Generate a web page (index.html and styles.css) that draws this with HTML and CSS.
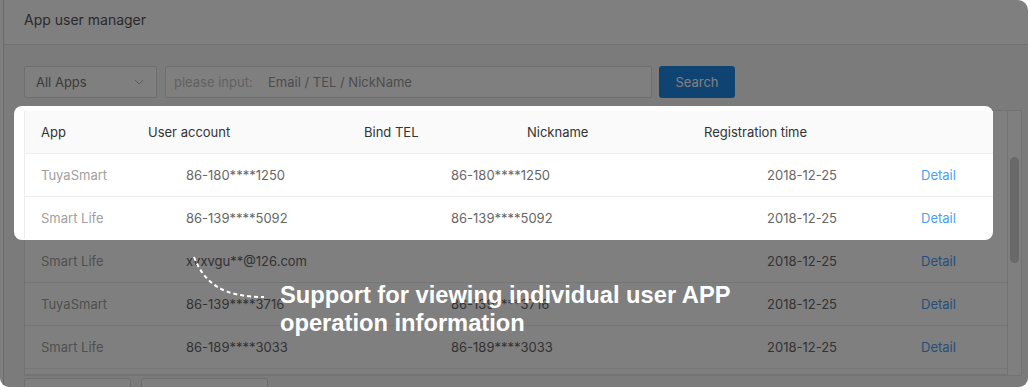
FILE: index.html
```html
<!DOCTYPE html>
<html lang="en">
<head>
    <meta charset="UTF-8">
    <title>App user manager</title>
    <link rel="stylesheet" href="styles.css">
</head>
<body>
    <div class="window">
        <div class="frame">
            <div class="title-bar">App user manager</div>
            <div class="content">
                <div class="filters">
                    <div class="select">
                        <span>All Apps</span>
                        <svg width="10" height="6" viewBox="0 0 10 6"><path d="M1 1l4 4 4-4" fill="none" stroke="#bbb" stroke-width="1"/></svg>
                    </div>
                    <div class="search-input">
                        <span class="hint">please input:</span>
                        <span class="ph">Email / TEL / NickName</span>
                    </div>
                    <button type="button" class="search-btn">Search</button>
                </div>

                <div class="table">
                    <div class="table-main">
                        <div class="spot">
                            <div class="spot-rows">
                                <div class="row head">
                                    <span>App</span>
                                    <span>User account</span>
                                    <span>Bind TEL</span>
                                    <span>Nickname</span>
                                    <span>Registration time</span>
                                </div>
                                <div class="row">
                                    <span class="app">TuyaSmart</span>
                                    <span>86-180****1250</span>
                                    <span>86-180****1250</span>
                                    <span>2018-12-25</span>
                                    <a class="link">Detail</a>
                                </div>
                                <div class="row">
                                    <span class="app">Smart Life</span>
                                    <span>86-139****5092</span>
                                    <span>86-139****5092</span>
                                    <span>2018-12-25</span>
                                    <a class="link">Detail</a>
                                </div>
                            </div>
                        </div>
                        <div class="row">
                            <span class="app">Smart Life</span>
                            <span>xvxvgu**@126.com</span>
                            <span></span>
                            <span>2018-12-25</span>
                            <a class="link">Detail</a>
                        </div>
                        <div class="row">
                            <span class="app">TuyaSmart</span>
                            <span>86-139****3716</span>
                            <span>86-139****3716</span>
                            <span>2018-12-25</span>
                            <a class="link">Detail</a>
                        </div>
                        <div class="row">
                            <span class="app">Smart Life</span>
                            <span>86-189****3033</span>
                            <span>86-189****3033</span>
                            <span>2018-12-25</span>
                            <a class="link">Detail</a>
                        </div>
                        <div class="table-foot"></div>
                    </div>
                    <div class="scroll"><div class="thumb"></div></div>
                </div>

                <div class="pager">
                    <span class="pg-box"></span>
                    <span class="pg-box wide"></span>
                </div>
            </div>
        </div>

        <div class="overlay"></div>

        <div class="note">
            <svg class="note-line" width="90" height="50" viewBox="0 0 90 50">
                <path d="M4 7 C 15 35, 35 47, 74 47" fill="none" stroke="#fff" stroke-width="2" stroke-dasharray="4 3"/>
            </svg>
            <p class="note-text">Support for viewing individual user APP<br>operation information</p>
        </div>
    </div>
</body>
</html>
```

FILE: styles.css
```css
body {
    margin: 0;
    background-color: #fff;
    font-family: Inter, "Noto Sans", sans-serif;
    font-size: 13px;
}
.window {
    position: relative;
    width: 1028px;
    height: 387px;
    border-radius: 0 10px 9px 9px;
    overflow: hidden;
    background-color: #fff;
}
.frame {
    margin-left: 3px;
    height: 100%;
    border-left: 1px solid #d6d6d6;
    background-color: #f6f6f6;
}
.title-bar {
    height: 44px;
    line-height: 39px;
    padding: 0 20px;
    background-color: #fff;
    border-bottom: 1px solid #e6e6e6;
    color: #555;
    font-size: 14px;
}
.content {
    padding: 21px 6px 0 20px;
}
.filters {
    display: flex;
    align-items: center;
}
.select {
    width: 133px;
    height: 32px;
    box-sizing: border-box;
    border: 1px solid #dcdcdc;
    border-radius: 2px;
    background-color: #fff;
    display: flex;
    align-items: center;
    justify-content: space-between;
    padding: 0 12px 0 11px;
    color: #777;
}
.search-input {
    width: 487px;
    height: 32px;
    box-sizing: border-box;
    margin-left: 8px;
    border: 1px solid #dcdcdc;
    border-radius: 2px;
    background-color: #fff;
    display: flex;
    align-items: center;
    padding-left: 8px;
}
.hint {
    color: #c4c4c4;
    width: 94px;
}
.ph {
    color: #999;
}
.search-btn {
    margin-left: 7px;
    width: 76px;
    height: 32px;
    border: none;
    border-radius: 3px;
    background-color: #1f86e5;
    color: #fff;
    font-family: Inter, "Noto Sans", sans-serif;
    font-size: 13px;
    padding: 0;
}
.table {
    display: flex;
    margin-top: 12px;
    border: 1px solid #e6e6e6;
    background-color: #fff;
}
.table-main {
    flex: 1;
}
.spot {
    position: relative;
    z-index: 2;
    margin: -5px 14px 0 -11px;
    padding: 5px 0 1px 10px;
    background-color: #fff;
    border-radius: 8px;
}
.spot-rows {
    border-left: 1px solid #ececec;
}
.row {
    display: grid;
    grid-template-columns: 145px 265px 316px 154px auto;
    align-items: center;
    height: 42px;
    padding-left: 16px;
    border-bottom: 1px solid #ececec;
    color: #666;
    white-space: nowrap;
}
.row.head {
    grid-template-columns: 107px 216px 163px 177px auto;
    background-color: #fafafa;
    color: #333;
    border-bottom-color: #efefef;
}
.spot .row:last-child {
    border-bottom: none;
}
.app {
    color: #a0a0a0;
}
.link {
    color: #4a9ff2;
}
.table-foot {
    height: 5px;
    border-bottom: 1px solid #e6e6e6;
}
.scroll {
    width: 13px;
    border-left: 1px solid #e6e6e6;
    padding-top: 46px;
}
.thumb {
    width: 9px;
    height: 106px;
    margin-left: 2px;
    border-radius: 5px;
    background-color: #d2d2d2;
}
.pager {
    display: flex;
    gap: 10px;
    margin-top: 2px;
}
.pg-box {
    width: 105px;
    height: 30px;
    border: 1px solid #dcdcdc;
    border-radius: 3px;
    background-color: #fff;
}
.pg-box.wide {
    width: 125px;
}
.overlay {
    position: absolute;
    inset: 0;
    z-index: 1;
    background-color: rgba(0, 0, 0, 0.5);
}
.note {
    position: absolute;
    z-index: 3;
    left: 190px;
    top: 250px;
}
.note-line {
    display: block;
}
.note-text {
    position: absolute;
    left: 90px;
    top: 31px;
    margin: 0;
    width: 520px;
    font-family: "Liberation Sans", Arial, sans-serif;
    font-weight: bold;
    font-size: 23.7px;
    line-height: 28px;
    color: #fff;
}
```
